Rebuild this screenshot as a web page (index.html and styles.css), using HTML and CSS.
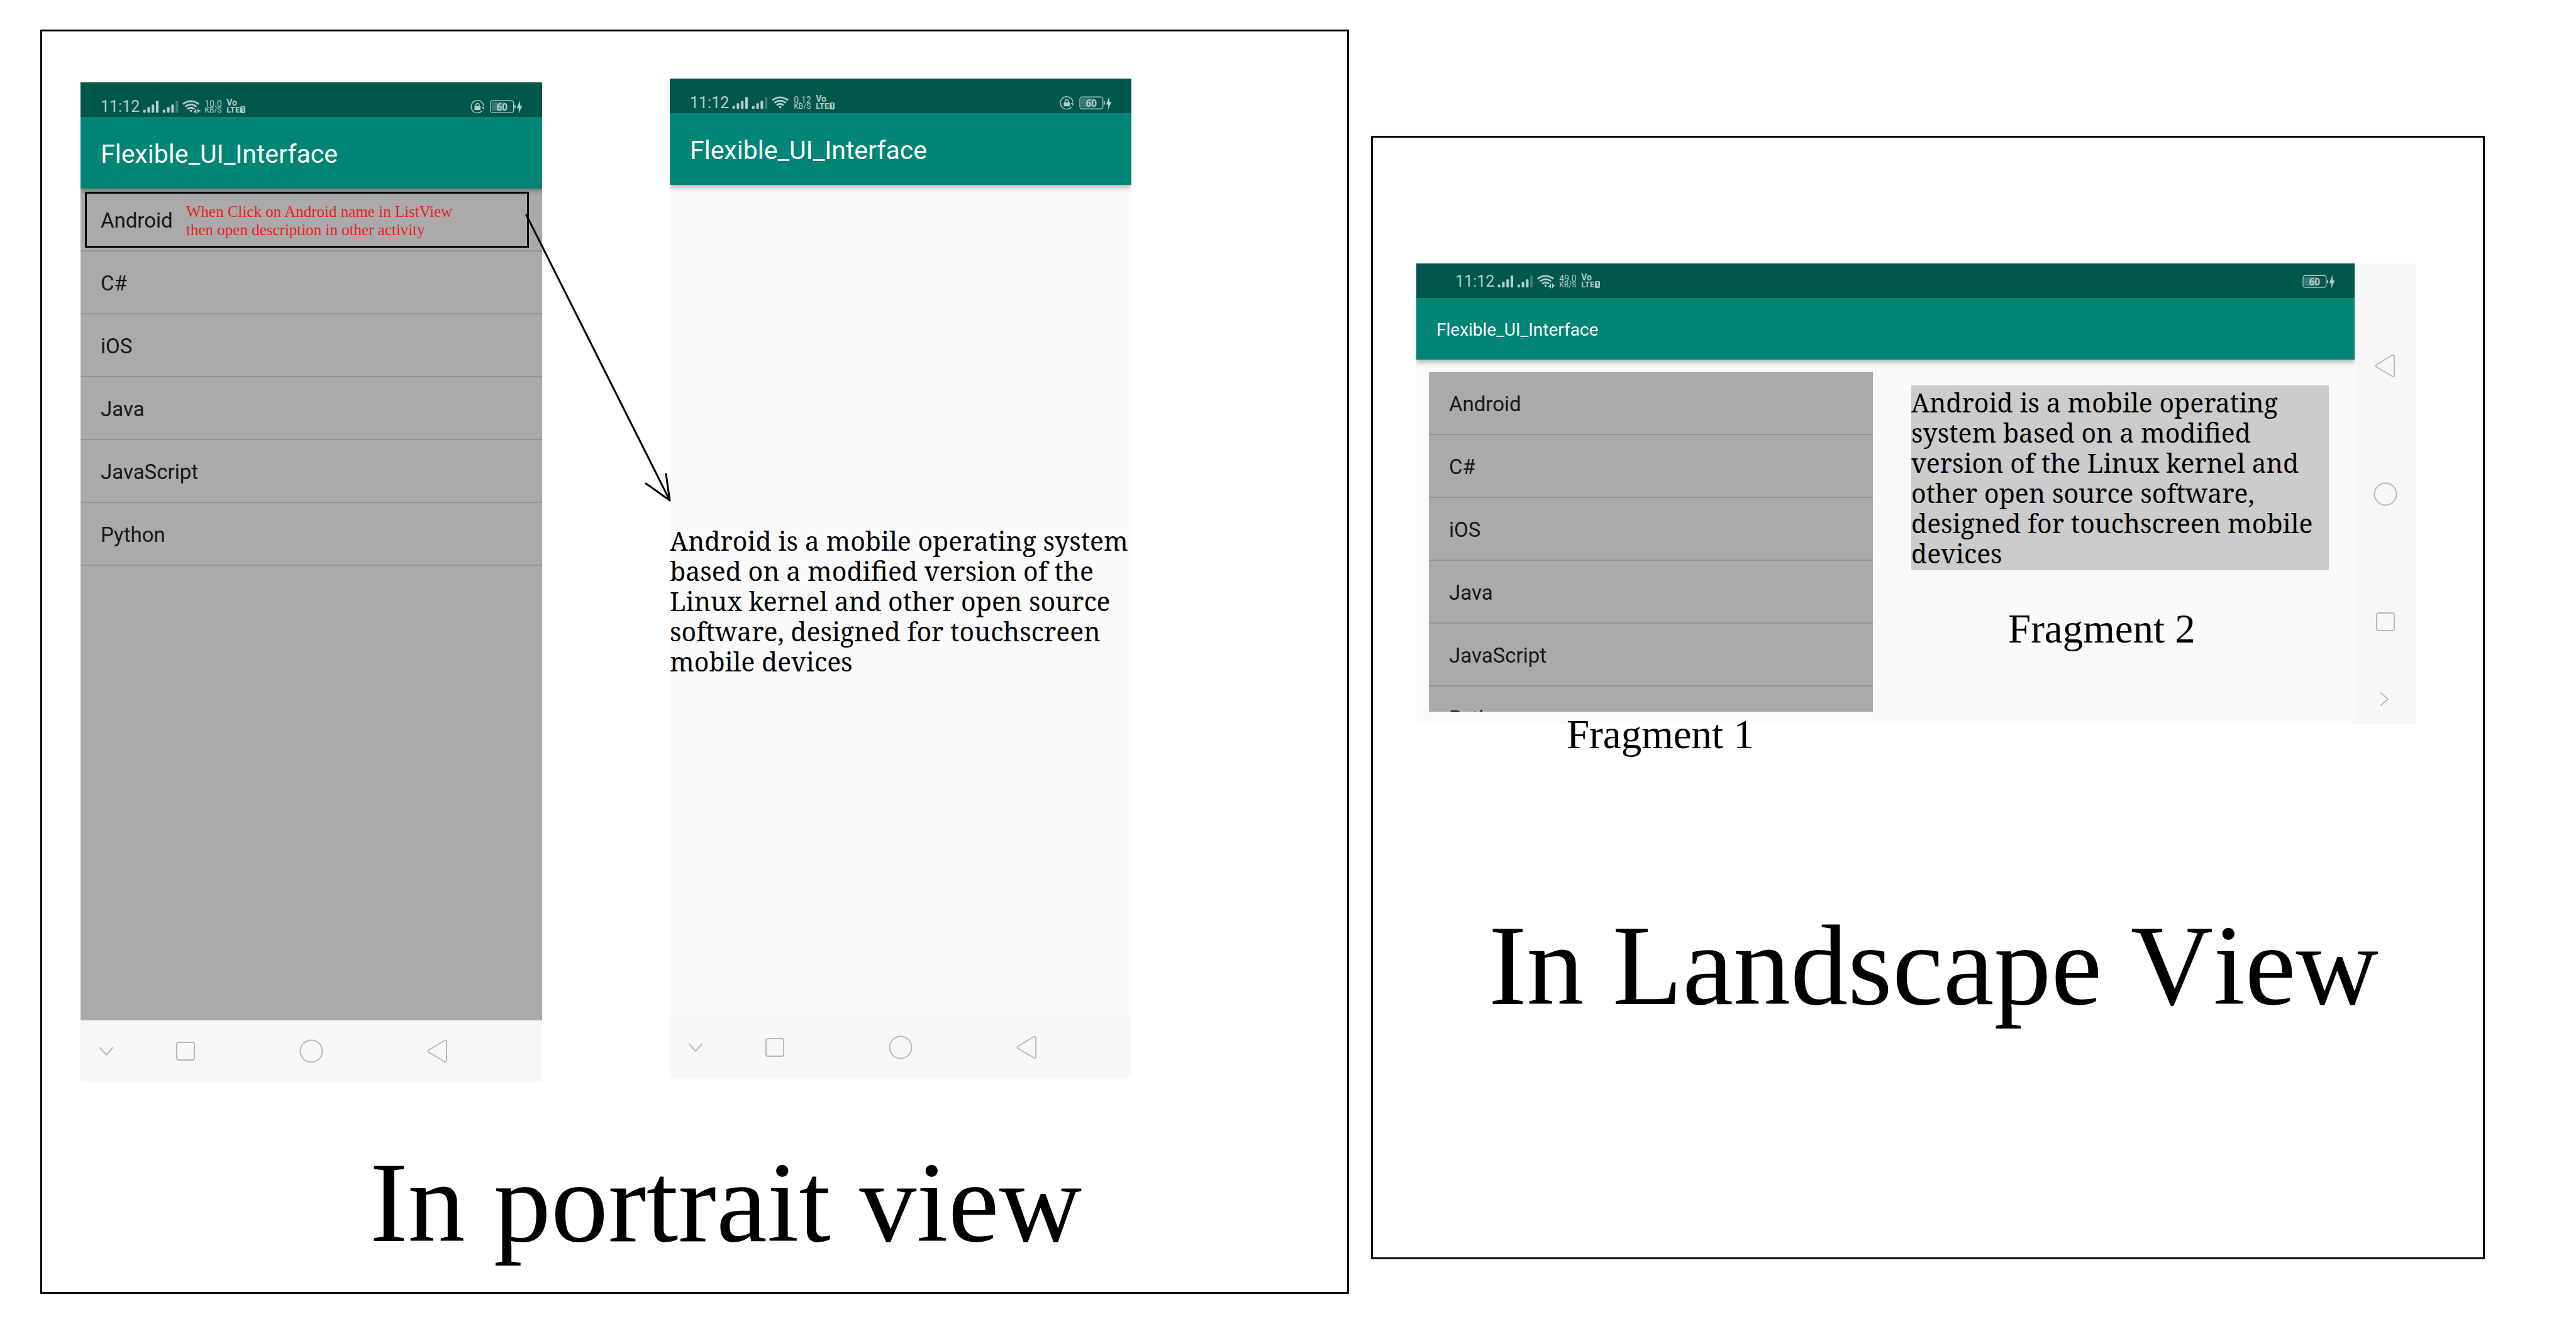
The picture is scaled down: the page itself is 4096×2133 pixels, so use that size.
FILE: index.html
```html
<!DOCTYPE html>
<html lang="en">
<head>
<meta charset="utf-8">
<title>Flexible UI: portrait and landscape</title>
<link rel="stylesheet" href="styles.css">
</head>
<body>
<svg class="defs" aria-hidden="true">
  <symbol id="signal" viewBox="395 55 420 115">
    <g class="ink">
      <rect x="402" y="132" width="18" height="21" rx="5"/>
      <rect x="432" y="114" width="18" height="39" rx="5"/>
      <rect x="462" y="96" width="18" height="57" rx="5"/>
      <rect x="492" y="69" width="18" height="84" rx="5"/>
      <rect x="540" y="132" width="18" height="21" rx="5"/>
      <rect x="570" y="114" width="18" height="39" rx="5"/>
      <rect x="600" y="96" width="18" height="57" rx="5"/>
      <rect x="630" y="69" width="18" height="84" rx="5" opacity=".35"/>
      <path d="M727 138q11-8 22 0l-11 14z"/>
    </g>
    <g class="line" stroke-width="12">
      <path d="M682 93Q738 51 794 93"/>
      <path d="M698 111Q738 80 778 111"/>
      <path d="M713 128Q738 108 763 128"/>
    </g>
  </symbol>
  <symbol id="transfer" viewBox="395 55 420 115">
    <path class="gap" d="M746 154l36-38 30 18-28 32h-38z"/>
    <path class="ink" d="M754 151l22-26v34h-7v-8zM784 159v-34h6v10h17z"/>
  </symbol>
  <symbol id="rotation" viewBox="60 55 110 115">
    <path class="line" stroke-width="6" d="M147 139A44 44 0 1 1 157 108"/>
    <path class="ink" d="M141 111l19 3v18z"/>
    <rect class="ink" x="93" y="107" width="42" height="28"/>
    <path class="line" stroke-width="7" d="M102 108v-8a12 12 0 0 1 24 0v8"/>
  </symbol>
  <symbol id="battery" viewBox="195 55 240 115">
    <rect class="line" stroke-width="6" x="204" y="69" width="163" height="84" rx="16"/>
    <path class="ink" opacity=".3" d="M226 78h74v66h-74q-13 0-13-13v-40q0-13 13-13z"/>
    <text class="ink charge" x="285" y="137">60</text>
    <rect class="ink" x="373" y="99" width="8" height="24" rx="3"/>
    <path class="ink" d="M411 66l-21 56h14l-1 38 24-56h-14z"/>
  </symbol>
  <symbol id="back" viewBox="0 0 40 40"><path class="nav-line" d="M30 3.500Q34 1 34 6V34Q34 39 30 36L6 22Q3 20 6 18Z"/></symbol>
  <symbol id="home" viewBox="0 0 40 40"><circle class="nav-line" cx="20" cy="20" r="17.500"/></symbol>
  <symbol id="recent" viewBox="0 0 40 40"><rect class="nav-line" x="6" y="6" width="28" height="28" rx="3"/></symbol>
  <symbol id="down" viewBox="0 0 40 40"><path class="nav-line" d="M9.500 14L20 26L30.500 14"/></symbol>
  <symbol id="right" viewBox="0 0 40 40"><path class="nav-line" d="M12 9.500L24 20L12 30.500"/></symbol>
</svg>

<main class="board">
  <section class="panel portrait">
    <div class="phones">
      <article class="device first">
        <div class="status">
          <time>11:12</time>
          <span class="radio"><svg><use href="#signal"/></svg><svg><use href="#transfer"/></svg></span>
          <span class="speed"><span>10.0</span><small>KB/S</small></span>
          <span class="volte"><span>Vo</span><span class="lte">LTE<i>1</i></span></span>
          <span class="power"><svg class="rotation"><use href="#rotation"/></svg><svg class="battery"><use href="#battery"/></svg></span>
        </div>
        <header class="appbar"><h2>Flexible_UI_Interface</h2></header>
        <ul class="list">
          <li>Android</li>
          <li>C#</li>
          <li>iOS</li>
          <li>Java</li>
          <li>JavaScript</li>
          <li>Python</li>
        </ul>
        <nav class="keys">
          <button aria-label="Hide bar"><svg><use href="#down"/></svg></button>
          <button aria-label="Recent apps"><svg><use href="#recent"/></svg></button>
          <button aria-label="Home"><svg><use href="#home"/></svg></button>
          <button aria-label="Back"><svg><use href="#back"/></svg></button>
        </nav>
        <p class="callout">When Click on Android name in ListView<br>then open description in other activity</p>
        <svg class="arrow" viewBox="0 0 238 468"><path d="M4 5L232 459M194 432L232 459L226 417"/></svg>
      </article>
      <article class="device">
        <div class="status">
          <time>11:12</time>
          <span class="radio"><svg><use href="#signal"/></svg></span>
          <span class="speed"><span>0.12</span><small>KB/S</small></span>
          <span class="volte"><span>Vo</span><span class="lte">LTE<i>1</i></span></span>
          <span class="power"><svg class="rotation"><use href="#rotation"/></svg><svg class="battery"><use href="#battery"/></svg></span>
        </div>
        <header class="appbar"><h2>Flexible_UI_Interface</h2></header>
        <div class="detail">
          <p class="description">Android is a mobile operating system<br>based on a modified version of the<br>Linux kernel and other open source<br>software, designed for touchscreen<br>mobile devices</p>
        </div>
        <nav class="keys">
          <button aria-label="Hide bar"><svg><use href="#down"/></svg></button>
          <button aria-label="Recent apps"><svg><use href="#recent"/></svg></button>
          <button aria-label="Home"><svg><use href="#home"/></svg></button>
          <button aria-label="Back"><svg><use href="#back"/></svg></button>
        </nav>
      </article>
    </div>
    <h1>In portrait view</h1>
  </section>

  <section class="panel landscape">
    <article class="device wide">
      <div class="screen">
        <div class="status">
          <time>11:12</time>
          <span class="radio"><svg><use href="#signal"/></svg><svg><use href="#transfer"/></svg></span>
          <span class="speed"><span>49.0</span><small>KB/S</small></span>
          <span class="volte"><span>Vo</span><span class="lte">LTE<i>1</i></span></span>
          <span class="power"><svg class="battery"><use href="#battery"/></svg></span>
        </div>
        <header class="appbar"><h2>Flexible_UI_Interface</h2></header>
        <div class="fragments">
          <ul class="list">
            <li>Android</li>
            <li>C#</li>
            <li>iOS</li>
            <li>Java</li>
            <li>JavaScript</li>
            <li>Python</li>
          </ul>
          <div class="side">
            <p class="description">Android is a mobile operating<br>system based on a modified<br>version of the Linux kernel and<br>other open source software,<br>designed for touchscreen mobile<br>devices</p>
            <p class="label">Fragment 2</p>
          </div>
        </div>
      </div>
      <nav class="keys">
        <button aria-label="Back"><svg><use href="#back"/></svg></button>
        <button aria-label="Home"><svg><use href="#home"/></svg></button>
        <button aria-label="Recent apps"><svg><use href="#recent"/></svg></button>
        <button aria-label="Hide bar"><svg><use href="#right"/></svg></button>
      </nav>
      <p class="label below">Fragment 1</p>
    </article>
    <h1>In Landscape View</h1>
  </section>
</main>
</body>
</html>
```

FILE: styles.css
```css
* { box-sizing: border-box; margin: 0; padding: 0; }

body {
  background: #fff;
  color: #000;
  font-family: "Liberation Serif", "Times New Roman", serif;
}

.defs { position: absolute; width: 0; height: 0; }
.ink { fill: #b3cdc9; }
.gap { fill: #00574b; }
.line { fill: none; stroke: #b3cdc9; }
.nav-line { fill: none; stroke: #b8b8b8; stroke-width: 2; stroke-linejoin: round; }
.charge { font: 700 68px "Noto Sans", sans-serif; text-anchor: middle; }

.board {
  display: grid;
  grid-template-columns: 2081fr 1771fr;
  align-items: start;
  column-gap: 35px;
  padding: 47px 145px 75px 64px;
}

.panel { border: 3px solid #000; }
.portrait { padding: 75px 61px 38px; }
.landscape { margin-top: 169px; padding: 200px 106px 360px 69px; }

.phones {
  display: grid;
  grid-template-columns: 734fr 734fr 79fr;
  column-gap: 203px;
  align-items: start;
}

.device { position: relative; background: #fafafa; }
.first { z-index: 1; margin-top: 6px; }

.status {
  display: flex;
  align-items: center;
  height: 55px;
  padding: 22px 30px 0 32px;
  background: #00574b;
  color: #b3cdc9;
  font-family: Roboto, sans-serif;
}
.status time { font-size: 25px; line-height: 32px; }
.status svg { display: block; height: 26px; }
.radio { position: relative; width: 95px; margin: 0 4px; }
.radio svg { width: 95px; }
.radio svg + svg { position: absolute; top: 0; left: 0; }
.speed, .volte { display: flex; flex-direction: column; font-size: 14px; line-height: 10px; }
.speed { width: 35px; }
.speed small { font-size: 12px; }
.volte { padding-bottom: 2px; font-weight: 700; line-height: 12px; }
.lte { display: flex; font-size: 13px; }
.lte i {
  width: 8px;
  height: 11px;
  margin-left: 1px;
  border-radius: 2px;
  background: #b3cdc9;
  color: #00574b;
  font-style: normal;
  font-size: 11px;
  line-height: 11px;
  text-align: center;
}
.power { display: flex; gap: 6px; margin-left: auto; }
.rotation { width: 25px; }
.battery { width: 54px; }

.appbar {
  position: relative;
  display: flex;
  align-items: center;
  height: 114px;
  padding: 4px 32px 0;
  background: #008577;
  color: #fff;
  box-shadow: 0 4px 8px rgba(0, 0, 0, .3);
  clip-path: inset(0 0 -20px 0);
}
.appbar h2 { font: 400 41px/48px Roboto, sans-serif; }

.list {
  height: 1323px;
  overflow: hidden;
  background: #aaa;
  color: #171717;
  font: 33px/95px Roboto, sans-serif;
  list-style: none;
}
.list li { padding: 3px 32px 0; border-bottom: 2px solid #949494; }

.detail { display: flex; align-items: center; height: 1323px; }
.description { font: 41px/48px "Noto Serif", "DejaVu Serif", serif; white-space: nowrap; }

.keys {
  display: grid;
  grid-template-columns: 82fr 170fr 230fr 172fr 80fr;
  height: 98px;
  background: #f7f7f7;
}
.keys button { display: grid; place-items: center; border: 0; background: none; }
.keys svg { display: block; width: 40px; height: 40px; }

.callout {
  position: absolute;
  top: 174px;
  left: 7px;
  width: 706px;
  height: 89px;
  padding: 14px 0 0 158px;
  border: 3px solid #000;
  color: #ed1c24;
  font-size: 25px;
  line-height: 29px;
  white-space: nowrap;
}
.arrow { position: absolute; top: 206px; left: 705px; width: 238px; height: 468px; }
.arrow path { fill: none; stroke: #000; stroke-width: 3; stroke-linecap: round; stroke-linejoin: round; }

h1 { font-weight: 400; font-size: 182px; line-height: 208px; font-kerning: none; white-space: nowrap; }
.portrait h1 { padding: 88px 0 0 460px; }

.wide { display: grid; grid-template-columns: 1fr 98px; height: 733px; }
.wide .status { padding: 2px 30px 0 62px; }
.wide .appbar { height: 98px; }
.wide .appbar h2 { font-size: 28px; }
.wide .keys { grid-template: 166fr 242fr 164fr 81fr / 1fr; height: auto; padding-top: 80px; }
.fragments { display: grid; grid-template-columns: 706fr 664fr; gap: 61px; padding: 20px 41px 20px 20px; }
.wide .list { height: 540px; }
.side { padding-top: 21px; }
.side .description { padding: 3px 0; background: #ccc; }

.label { font-size: 65px; line-height: 74px; }
.side .label { padding: 56px 0 0 154px; }
.below { position: absolute; top: 712px; left: 239px; }
.landscape h1 { padding: 280px 0 0 115px; }
```
